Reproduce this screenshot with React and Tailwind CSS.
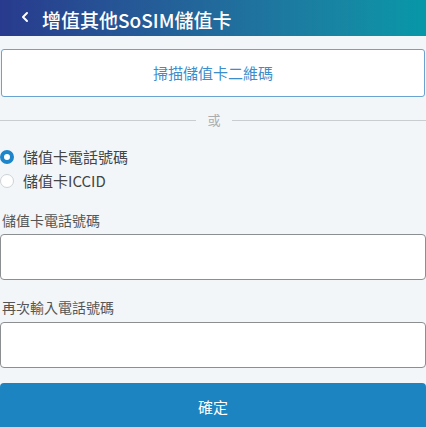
const App = () => {
  return (
    <div
      className="min-h-screen bg-[#f3f6f8]"
      style={{ fontFamily: '"Noto Sans CJK TC", "Noto Sans", sans-serif' }}
    >
      <header className="h-[36px] flex items-center bg-gradient-to-r from-[#283a8d] to-[#0698a8] text-white">
        <svg className="ml-[20px] mb-[3px]" width="10" height="12" viewBox="0 0 10 12" fill="none">
          <path d="M7 2 L3 6 L7 10" stroke="white" strokeWidth="2" strokeLinecap="round" strokeLinejoin="round" />
        </svg>
        <h1 className="ml-[12px] mt-[2px] text-[19px] font-medium leading-none">增值其他SoSIM儲值卡</h1>
      </header>

      <main>
        <button className="mt-[13px] mx-[1px] w-[424px] h-[48px] bg-white border border-[#6aa3cf] rounded-[3px] text-[15px] text-[#3c8dcc]">
          掃描儲值卡二維碼
        </button>

        <div className="mt-[13px] h-[20px] flex items-center">
          <div className="w-[196px] h-px bg-[#c9cdd1]" />
          <span className="flex-1 text-center text-[13px] text-[#a9adb1]">或</span>
          <div className="w-[194px] h-px bg-[#c9cdd1]" />
        </div>

        <div className="mt-[15px]">
          <label className="h-[24px] flex items-center">
            <span className="w-[14px] h-[14px] rounded-full border-[4px] border-[#1d85c9] bg-white" />
            <span className="ml-[9px] text-[15px] text-[#444]">儲值卡電話號碼</span>
          </label>
          <label className="h-[24px] flex items-center">
            <span className="w-[14px] h-[14px] rounded-full border border-[#cfd3d6] bg-white" />
            <span className="ml-[9px] text-[15px] text-[#444]">儲值卡ICCID</span>
          </label>
        </div>

        <div className="mt-[17px] h-[20px] flex items-center pl-[2px] text-[14px] text-[#555]">儲值卡電話號碼</div>
        <input className="mt-[4px] block w-full h-[46px] bg-white border border-[#8c8f92] rounded-[4px] px-3 outline-none" />

        <div className="mt-[17px] h-[20px] flex items-center pl-[2px] text-[14px] text-[#555]">再次輸入電話號碼</div>
        <input className="mt-[5px] block w-full h-[46px] bg-white border border-[#8c8f92] rounded-[4px] px-3 outline-none" />

        <button className="mt-[15px] block w-full h-[48px] bg-[#1c84c1] rounded-[4px] text-[15px] text-white">
          確定
        </button>
      </main>
    </div>
  )
}

export default App
